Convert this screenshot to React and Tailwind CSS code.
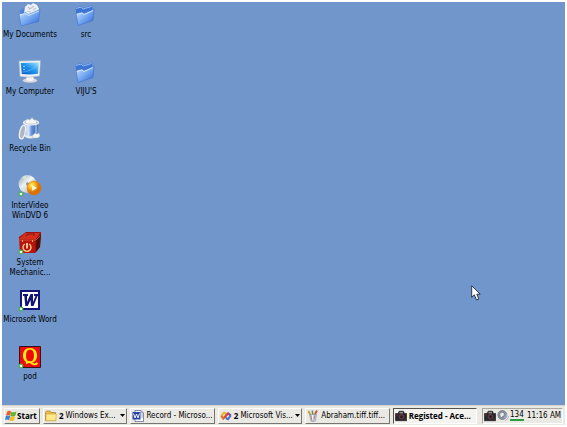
import React from "react";

function Shortcut({ x = 3, y = 21 }) {
  return <circle cx={x} cy={y} r="1.9" fill="#f0fff0" stroke="#42b342" strokeWidth="1.1" />;
}

function Folder({ open = false }) {
  return (
    <svg viewBox="0 0 24 24" className="h-6 w-6" aria-hidden="true">
      <defs>
        <linearGradient id="folderFront" x1="0" y1="0" x2="1" y2="1">
          <stop offset="0" stopColor="#d2e6ff" />
          <stop offset="0.5" stopColor="#76a9f2" />
          <stop offset="1" stopColor="#2b62cf" />
        </linearGradient>
      </defs>
      {open ? (
        <>
          <path d="M2 8 L6 5 L9 6 L19 4 L20 18 L3 22 Z" fill="#4c82dc" />
          <path d="M6 10 L7 4 L10 1 L13 2 L15 0 L19 2 L21 6 L19 12 L8 13 Z" fill="#edf1f5" />
          <path d="M10 4 L12 6 L16 3 M15 7 L18 5 M9 8 L13 9" fill="none" stroke="#b9c5cf" strokeWidth="1.2" />
          <path d="M1 11 L8 9.5 L10 11.5 L22 6.5 L20.5 18.5 L3 23 Z" fill="url(#folderFront)" stroke="#3d70c9" strokeWidth="0.5" />
          <path d="M2 12 L8 10.5 L10 12.5 L21 8" fill="none" stroke="#e5f2ff" strokeWidth="0.8" />
        </>
      ) : (
        <>
          <path d="M1.5 5 L7 3 L9 5 L18 2.5 L19 17 L4 22 Z" fill="#3e75d4" />
          <path d="M2 5.5 L7 4 L9 6 L17.5 3.5" fill="none" stroke="#a6cbff" strokeWidth="0.8" />
          <path d="M2 10.5 L8 9 L10 10.5 L20 6 L19 17.5 L4 22.5 Z" fill="url(#folderFront)" stroke="#3468c4" strokeWidth="0.5" />
          <path d="M3 11.5 L8 10 L10 11.5 L19 7.5" fill="none" stroke="#e3f0ff" strokeWidth="0.8" />
        </>
      )}
    </svg>
  );
}

function Computer() {
  return (
    <svg viewBox="0 0 24 24" className="h-6 w-6" aria-hidden="true">
      <defs>
        <linearGradient id="screen" x1="0" y1="1" x2="1" y2="0">
          <stop offset="0" stopColor="#0b58c5" />
          <stop offset="0.5" stopColor="#1e92ed" />
          <stop offset="1" stopColor="#9ce6ff" />
        </linearGradient>
      </defs>
      <ellipse cx="12" cy="20.5" rx="7.5" ry="2.4" fill="#d8dce2" stroke="#8694a5" strokeWidth="0.5" />
      <path d="M9 15 H15 L16 20 Q12 22 8 20Z" fill="#f4f4f4" />
      <path d="M1 1 L22.5 0.5 L21.5 16 Q12 18 2 16.5 Z" fill="#f0f2f3" stroke="#a3b2c2" strokeWidth="0.6" />
      <path d="M2.8 3 L20.8 2.5 L20 13.8 Q12 15 3.8 14 Z" fill="url(#screen)" />
      <path d="M4 12 Q13 12 20.5 4" fill="none" stroke="#83d8ff" strokeWidth="0.8" opacity="0.6" />
      <path d="M5 6h2v1h-2z M5 9h2v1h-2z" fill="#8fd9ff" />
    </svg>
  );
}

function Bin() {
  return (
    <svg viewBox="0 0 24 24" className="h-6 w-6" aria-hidden="true">
      <defs>
        <linearGradient id="bin" x1="0" x2="1">
          <stop offset="0" stopColor="#5e86cf" />
          <stop offset="0.3" stopColor="#dceaff" />
          <stop offset="0.55" stopColor="#638fdb" />
          <stop offset="1" stopColor="#345da7" />
        </linearGradient>
      </defs>
      <path d="M6 5 H20 L19 19 Q12 23 7 19Z" fill="url(#bin)" />
      <path d="M6 17 Q12 21 19 17 L18.5 20 Q12 23 7 20Z" fill="#e7e9e9" />
      <ellipse cx="13" cy="5.5" rx="7.5" ry="2.3" fill="#b4c1d2" stroke="#f6f7f8" strokeWidth="1.2" />
      <path d="M7 5 L9 2 L12 3 L14 0.5 L16 3 L19 3 L18 7 L9 7Z" fill="#f4f5f5" stroke="#a6afb8" strokeWidth="0.5" />
      <path d="M9 8v10 M18 8v8" stroke="#d5e3f6" />
      <ellipse cx="4.5" cy="15" rx="2.7" ry="7" transform="rotate(12 4.5 15)" fill="#aeb7c1" stroke="#f1f2f2" strokeWidth="1.3" />
      <path d="M14 19 L17 16 L19 17 L21 16 L22 19 L20 21 L15 21Z" fill="#f4f4f4" stroke="#a7b0b8" strokeWidth="0.5" />
    </svg>
  );
}

function Dvd() {
  return (
    <svg viewBox="0 0 24 24" className="h-6 w-6" aria-hidden="true">
      <defs>
        <radialGradient id="orange" cx="0.35" cy="0.3">
          <stop offset="0" stopColor="#fff27d" />
          <stop offset="0.45" stopColor="#ffb91f" />
          <stop offset="1" stopColor="#dc7100" />
        </radialGradient>
        <linearGradient id="disc" x1="0" y1="0" x2="1" y2="1">
          <stop offset="0" stopColor="#8b9dae" />
          <stop offset="0.45" stopColor="#f2f6f8" />
          <stop offset="1" stopColor="#8f9ead" />
        </linearGradient>
      </defs>
      <circle cx="9.5" cy="10" r="9" fill="url(#disc)" />
      <path d="M9 10 L4 3 L8 1Z M9 10 L2 15 L5 18Z" fill="#d9e7de" opacity="0.8" />
      <circle cx="9.5" cy="10" r="2.2" fill="#8b9cad" stroke="#eef3f5" />
      <circle cx="16" cy="14" r="7" fill="url(#orange)" stroke="#d17a0b" strokeWidth="0.5" />
      <path d="M14 11 L19 14 L14 17Z" fill="#fff5d0" />
      <Shortcut y={20} />
    </svg>
  );
}

function Toolbox() {
  return (
    <svg viewBox="0 0 24 24" className="h-6 w-6" aria-hidden="true">
      <path d="M1 6 L8 1 H23 L22 16 L17 22 H2Z" fill="#9d1009" />
      <path d="M1 8 L7 2 H22 L18 8Z" fill="#d92d1b" />
      <path d="M2 9 H17 V22 H2Z" fill="#b9130b" />
      <path d="M18 8 L23 3 L22 16 L18 21Z" fill="#4d1009" />
      <path d="M8 5 L10 3 H16 V5" fill="none" stroke="#7b2018" strokeWidth="1.2" />
      <path d="M1 9 H18 L22 5" fill="none" stroke="#e85f3b" strokeWidth="0.8" />
      <path d="M4 9v2h1V9 M14 9v2h1V9" fill="#eab163" />
      <path d="M6.8 13 A4 4 0 1 0 11.2 13" fill="none" stroke="#f6cf90" strokeWidth="1.4" />
      <path d="M9 12v5.5" stroke="#fff0be" strokeWidth="1.6" />
      <Shortcut />
    </svg>
  );
}

function Word() {
  return (
    <svg viewBox="0 0 24 24" className="h-6 w-6" aria-hidden="true">
      <path d="M3 3 H21 V21 H3Z" fill="#fff" stroke="#111676" strokeWidth="2" />
      <path d="M5 6 H10 V8 H9 L9 14 L12.5 6 H15 L15 14 L17.5 8 H16 V6 H20.5 V8 H19.5 L15.5 18 H13 L12.5 12 L9.8 18 H7.3 L6.3 8 H5Z" fill="#111676" />
      <Shortcut />
    </svg>
  );
}

function Pod() {
  return (
    <svg viewBox="0 0 24 24" className="h-6 w-6" aria-hidden="true">
      <path d="M1.5 1.5 H22.5 V22.5 H1.5Z" fill="#ee0b0b" stroke="#321421" />
      <path fillRule="evenodd" d="M12 3 C16.5 3 19 6 19 10.5 C19 15 16.5 18 12 18 C7.5 18 5 15 5 10.5 C5 6 7.5 3 12 3Z M12 4.5 C9.3 4.5 8 6.5 8 10.5 C8 14.5 9.3 16.5 12 16.5 C14.7 16.5 16 14.5 16 10.5 C16 6.5 14.7 4.5 12 4.5Z" fill="#ffed17" />
      <path d="M8 18.5 Q11 15.5 14 18.5 Q17 20.5 19.5 18" fill="none" stroke="#ffed17" strokeWidth="1.8" />
      <Shortcut />
    </svg>
  );
}

function StartFlag() {
  return (
    <svg viewBox="0 0 12 12" className="h-3 w-3 shrink-0" aria-hidden="true">
      <path d="M2 2 Q4 0 6 1.5 L5.2 5.8 Q3 4.4 1 5.8Z" fill="#ef5b2b" />
      <path d="M6.2 1.8 Q9 3 11.5 1.5 L10.3 5.8 Q8 7 5.5 5.9Z" fill="#62b52f" />
      <path d="M.8 6 Q3 4.8 5.1 6.1 L4.2 10.2 Q2 8.8 0 10.2Z" fill="#367fe4" />
      <path d="M5.4 6.2 Q8 7.4 10.2 6.2 L9 10.5 Q7 11.5 4.5 10.4Z" fill="#f6bc22" />
    </svg>
  );
}

function SmallFolder() {
  return (
    <svg viewBox="0 0 12 12" className="h-3 w-3 shrink-0" aria-hidden="true">
      <path d="M.5 2.5 L1.5 1 H5 L6 2.5 H10.5 V10.5 H.5Z" fill="#edbd45" stroke="#ac8026" strokeWidth="0.7" />
      <path d="M1 4 H11.3 L10.8 10.8 H1Z" fill="#ffe98a" stroke="#c69b3b" strokeWidth="0.6" />
    </svg>
  );
}

function SmallWord() {
  return (
    <svg viewBox="0 0 12 12" className="h-3 w-3 shrink-0" aria-hidden="true">
      <path d="M3 .5 H9 L11.5 3 V11.5 H3Z" fill="#fff" stroke="#555f86" strokeWidth="0.7" />
      <path d="M9 .5V3H11.5 M9 5h2 M9 7h2" fill="none" stroke="#7180a5" strokeWidth="0.7" />
      <path d="M.5 2 H8.5 V9.5 H.5Z" fill="#2845a2" />
      <path d="M1.5 3.5 L3 8 L4.5 4 L6 8 L7.5 3.5" fill="none" stroke="#fff" strokeWidth="0.9" />
    </svg>
  );
}

function VisualStudio() {
  return (
    <svg viewBox="0 0 12 12" className="h-3 w-3 shrink-0" aria-hidden="true" fill="none" strokeWidth="2">
      <path d="M6.5 4 L4 2.7 L1.2 5.8" stroke="#e8b528" />
      <path d="M1.2 5.8 L3.3 8.6 L7.8 3.5" stroke="#e26e23" />
      <path d="M4.5 7.5 L8 3.3 L10.8 5.5" stroke="#d74635" />
      <path d="M10.8 5.5 L8 9.2 L5.8 8" stroke="#3f72cf" />
      <path d="M8 3.3 L10.8 5.5" stroke="#7b53b0" />
    </svg>
  );
}

function PaintCup() {
  return (
    <svg viewBox="0 0 12 12" className="h-3 w-3 shrink-0" aria-hidden="true">
      <path d="M4 6 L1.5 1" stroke="#d49835" strokeWidth="1.8" />
      <path d="M5.8 5 L5.3 .5" stroke="#43a158" strokeWidth="1.6" />
      <path d="M7 6 L10 .5" stroke="#d64f3e" strokeWidth="1.9" />
      <path d="M2.5 4.5 H9.5 L8.5 11 Q6 12.5 3.8 11Z" fill="#b9cbd2" stroke="#8b9ca6" strokeWidth="0.6" />
      <path d="M3.8 5.5 L5 10.5 M8 5.5 L6.5 10" stroke="#c97970" />
      <path d="M5.5 5 L5.8 10" stroke="#e7f5fa" strokeWidth="1.2" />
    </svg>
  );
}

function Camera() {
  return (
    <svg viewBox="0 0 12 12" className="h-3 w-3 shrink-0" aria-hidden="true">
      <path d="M.5 3.5 H3 L4.2 1.2 H8.5 L9.5 3.5 H11.7 V10.7 H.5Z" fill="#29272a" stroke="#121214" strokeWidth="0.6" />
      <path d="M4.5 2.8 H8" stroke="#d8c8c8" strokeWidth="0.9" />
      <circle cx="6.5" cy="6.8" r="2.3" fill="#592125" stroke="#59515a" strokeWidth="0.8" />
      <circle cx="6.5" cy="6.8" r="0.9" fill="#171719" />
      <path d="M1 5 H3 M9.5 9H11" stroke="#7c2930" strokeWidth="1" />
    </svg>
  );
}

function Volume() {
  return (
    <svg viewBox="0 0 12 12" className="h-3 w-3 shrink-0" aria-hidden="true">
      <circle cx="5.3" cy="5" r="4.5" fill="#8e959d" stroke="#6c747d" strokeWidth="0.7" />
      <circle cx="5" cy="4.5" r="2.5" fill="#d7dbe0" stroke="#737d8b" />
      <path d="M6 3 L4 7" stroke="#fff" />
      <path d="M7 8 Q10 7 10 4 M8 10.5 Q12 9 11.5 6" fill="none" stroke="#aab5ed" />
    </svg>
  );
}

const desktopItems = [
  ["My Documents", <Folder open />],
  ["My Computer", <Computer />],
  ["Recycle Bin", <Bin />],
  ["InterVideo\nWinDVD 6", <Dvd />],
  ["System\nMechanic...", <Toolbox />],
  ["Microsoft Word", <Word />],
  ["pod", <Pod />],
  ["src", <Folder />],
  ["VIJU'S", <Folder />],
];

const tasks = [
  { label: "Windows Ex...", icon: <SmallFolder />, count: 2 },
  { label: "Record - Microso...", icon: <SmallWord /> },
  { label: "Microsoft Vis...", icon: <VisualStudio />, count: 2 },
  { label: "Abraham.tiff.tiff...", icon: <PaintCup /> },
  { label: "Registed - Ace...", icon: <Camera />, active: true },
];

const strong = "font-['Open_Sans','Noto_Sans',sans-serif] font-bold";
const raised = "border border-t-white border-l-white border-r-[#77756f] border-b-[#77756f] bg-[#ebe9e4]";
const pressed = "border border-t-[#55534f] border-l-[#55534f] border-r-white border-b-white bg-[#f5f3f0]";

export default function App() {
  return (
    <div className="flex min-h-screen flex-col bg-white p-0.5 font-['DejaVu_Sans_Condensed','DejaVu_Sans',sans-serif] text-[8px] leading-[10px] text-black">
      <main className="relative grow bg-[#7096cb]">
        <div className="grid grid-flow-col auto-cols-[56px] grid-rows-[repeat(7,57px)]">
          {desktopItems.map(([label, icon]) => (
            <button key={label} type="button" className="flex flex-col items-center gap-[3px] pt-px">
              {icon}
              <span className="whitespace-pre text-center">{label}</span>
            </button>
          ))}
        </div>
        <svg viewBox="0 0 10 16" className="absolute top-[283px] left-[469px] h-4 w-2.5" aria-hidden="true">
          <path d="M.7 .8 V12.3 L3.3 9.8 L5.5 15 L7.8 14 L5.8 9.2 H9.2Z" fill="#fff" stroke="#202838" strokeWidth="0.9" />
        </svg>
      </main>
      <footer className="flex h-5 items-center gap-[3px] border-t border-[#d6d2c9] bg-[#ebe9e4] px-0.5">
        <button type="button" className={`flex h-4 w-9 shrink-0 items-center ${strong} ${raised}`}>
          <StartFlag />
          Start
        </button>
        {tasks.map(({ label, icon, count, active }) => (
          <button key={label} type="button" className={`flex h-4 min-w-0 flex-1 items-center gap-0.5 px-px ${active ? pressed : raised}`}>
            {icon}
            {count && <b className={strong}>{count}</b>}
            <span className={`grow text-left whitespace-nowrap ${active ? strong : ""}`}>{label}</span>
            {count && (
              <svg viewBox="0 0 5 3" className="h-[3px] w-[5px] shrink-0" aria-hidden="true">
                <path d="M0 0 H5 L2.5 3Z" fill="#000" />
              </svg>
            )}
          </button>
        ))}
        <div className="ml-0.5 flex h-4 w-[81px] shrink-0 items-center gap-px border border-t-[#aaa79f] border-l-[#aaa79f] border-r-white border-b-white px-px">
          <Camera />
          <Volume />
          <span className="border-b-2 border-[#2c9b42] leading-[9px]">134</span>
          <time className="ml-auto whitespace-nowrap">11:16 AM</time>
        </div>
      </footer>
    </div>
  );
}
